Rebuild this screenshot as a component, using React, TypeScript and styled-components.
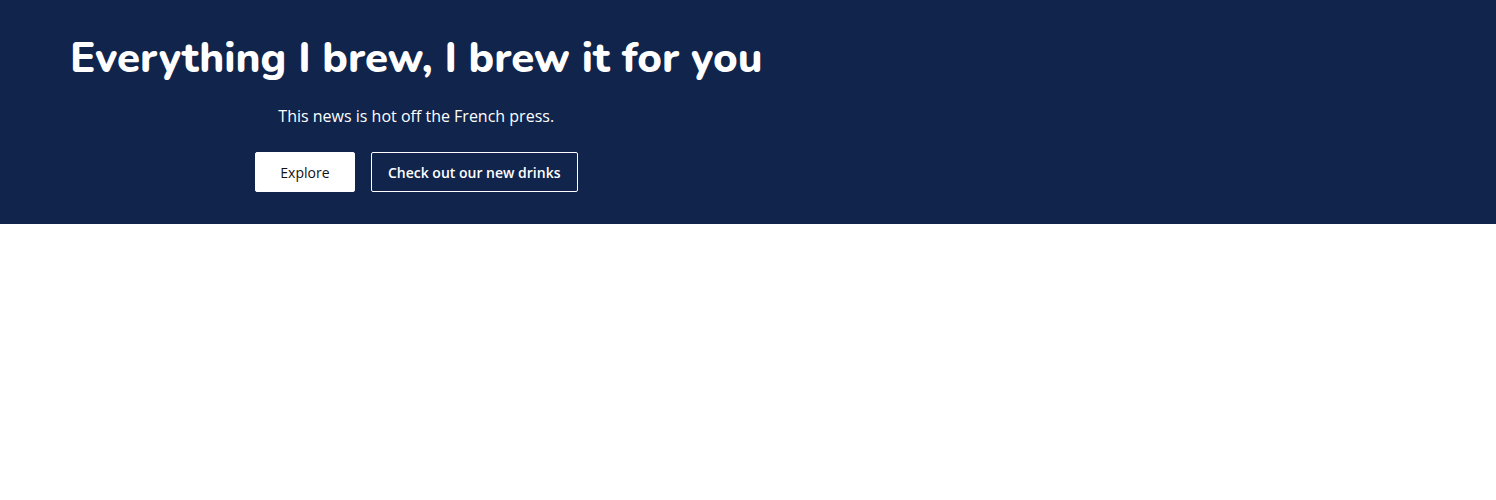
import styled, { createGlobalStyle } from 'styled-components';

const GlobalStyle = createGlobalStyle`
  body {
    margin: 0;
    background: #fff;
    font-family: 'Open Sans', 'Liberation Sans', sans-serif;
  }
`;

const Hero = styled.header`
  background: #10244c;
  color: #fff;
  height: 224px;
  box-sizing: border-box;
  padding: 30px 0 0 70px;
`;

const HeroInner = styled.div`
  display: inline-flex;
  flex-direction: column;
  align-items: center;
`;

const Title = styled.h1`
  margin: 0;
  font-family: 'Nunito', 'Lato', 'Open Sans', sans-serif;
  font-weight: 800;
  font-size: 42px;
  line-height: 58px;
`;

const Tagline = styled.p`
  margin: 17px 0 0;
  font-size: 16px;
  line-height: 22px;
`;

const Actions = styled.div`
  display: flex;
  gap: 16px;
  margin-top: 25px;
`;

const Button = styled.button<{ $variant?: 'solid' | 'outline' }>`
  height: 40px;
  box-sizing: border-box;
  padding: 0 16px;
  border-radius: 2px;
  font-family: 'Open Sans', 'Liberation Sans', sans-serif;
  font-size: 14px;
  cursor: pointer;
  border: 1px solid #fff;
  background: ${(p) => (p.$variant === 'outline' ? 'transparent' : '#fff')};
  color: ${(p) => (p.$variant === 'outline' ? '#fff' : '#111')};
  font-weight: ${(p) => (p.$variant === 'outline' ? 600 : 500)};
  min-width: ${(p) => (p.$variant === 'outline' ? 'auto' : '100px')};
`;

export default function App() {
  return (
    <>
      <GlobalStyle />
      <Hero>
        <HeroInner>
          <Title>Everything I brew, I brew it for you</Title>
          <Tagline>This news is hot off the French press.</Tagline>
          <Actions>
            <Button>Explore</Button>
            <Button $variant='outline'>Check out our new drinks</Button>
          </Actions>
        </HeroInner>
      </Hero>
    </>
  );
}
